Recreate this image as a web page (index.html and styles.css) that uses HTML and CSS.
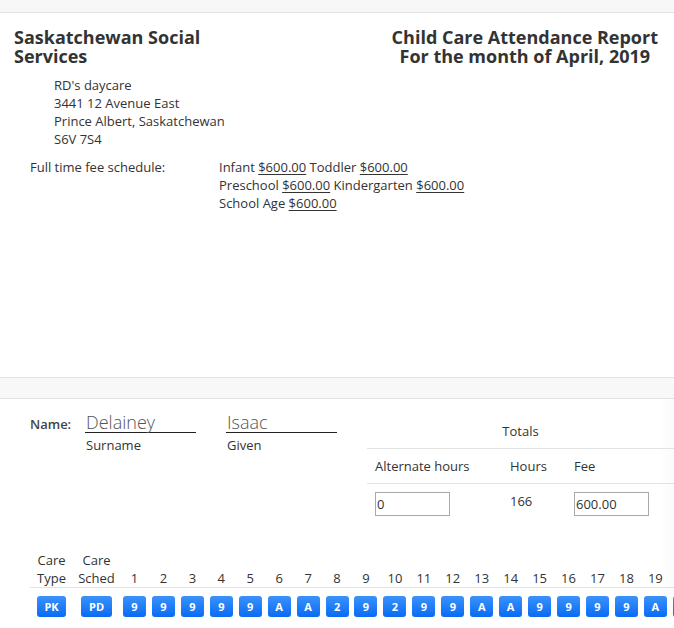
FILE: index.html
```html
<!DOCTYPE html>
<html lang="en">
<head>
<meta charset="utf-8">
<title>Child Care Attendance Report</title>
<link rel="stylesheet" href="styles.css">
</head>
<body>
<div class="topbar"></div>
<section class="sheet sheet-header">
  <div class="titles">
    <h1 class="org">Saskatchewan Social<br>Services</h1>
    <h1 class="report-title">Child Care Attendance Report<br>For the month of April, 2019</h1>
  </div>
  <address class="provider">RD's daycare<br>3441 12 Avenue East<br>Prince Albert, Saskatchewan<br>S6V 7S4</address>
  <div class="fees">
    <div class="fees-label">Full time fee schedule:</div>
    <div class="fees-list">Infant <u>$600.00</u> Toddler <u>$600.00</u><br>Preschool <u>$600.00</u> Kindergarten <u>$600.00</u><br>School Age <u>$600.00</u></div>
  </div>
</section>
<div class="gap"></div>
<section class="sheet child">
  <div class="child-top">
    <div class="name-label">Name:</div>
    <div class="name-field"><span class="name-value">Delainey</span><span class="name-caption">Surname</span></div>
    <div class="name-field"><span class="name-value">Isaac</span><span class="name-caption">Given</span></div>
    <table class="totals">
      <colgroup><col class="c-alt"><col class="c-hours"><col class="c-fee"></colgroup>
      <tr><th colspan="3" class="totals-title">Totals</th></tr>
      <tr><th>Alternate hours</th><th>Hours</th><th>Fee</th></tr>
      <tr><td><input class="box" type="text" value="0"></td><td>166</td><td><input class="box" type="text" value="600.00"></td></tr>
    </table>
  </div>
  <div class="att-wrap">
    <table class="attendance">
      <colgroup><col class="c-type"><col class="c-sched"></colgroup>
      <thead>
        <tr><th>Care<br>Type</th><th>Care<br>Sched</th><th>1</th><th>2</th><th>3</th><th>4</th><th>5</th><th>6</th><th>7</th><th>8</th><th>9</th><th>10</th><th>11</th><th>12</th><th>13</th><th>14</th><th>15</th><th>16</th><th>17</th><th>18</th><th>19</th><th>20</th><th>21</th><th>22</th><th>23</th><th>24</th><th>25</th><th>26</th><th>27</th><th>28</th><th>29</th><th>30</th></tr>
      </thead>
      <tbody>
        <tr>
          <td><span class="btn btn-type">PK</span></td>
          <td><span class="btn btn-sched">PD</span></td>
          <td><span class="btn">9</span></td><td><span class="btn">9</span></td><td><span class="btn">9</span></td><td><span class="btn">9</span></td><td><span class="btn">9</span></td>
          <td><span class="btn">A</span></td><td><span class="btn">A</span></td><td><span class="btn">2</span></td><td><span class="btn">9</span></td><td><span class="btn">2</span></td>
          <td><span class="btn">9</span></td><td><span class="btn">9</span></td><td><span class="btn">A</span></td><td><span class="btn">A</span></td><td><span class="btn">9</span></td>
          <td><span class="btn">9</span></td><td><span class="btn">9</span></td><td><span class="btn">9</span></td><td><span class="btn">A</span></td><td><span class="btn">A</span></td>
          <td><span class="btn">A</span></td><td><span class="btn">9</span></td><td><span class="btn">9</span></td><td><span class="btn">9</span></td><td><span class="btn">9</span></td>
          <td><span class="btn">9</span></td><td><span class="btn">A</span></td><td><span class="btn">A</span></td><td><span class="btn">9</span></td><td><span class="btn">9</span></td>
        </tr>
      </tbody>
    </table>
  </div>
</section>
</body>
</html>
```
FILE: styles.css
```css
html, body {
  margin: 0;
  padding: 0;
  background: #fff;
}
body {
  font-family: "Open Sans", "DejaVu Sans", sans-serif;
  font-size: 13px;
  line-height: 18px;
  color: #333;
  overflow: hidden;
}
.topbar {
  height: 12px;
  background: #f7f7f7;
  border-bottom: 1px solid #e2e2e2;
}
.sheet {
  background: #fff;
  overflow: hidden;
}
.sheet-header {
  box-sizing: border-box;
  min-height: 365px;
  padding: 15px 16px 0 14px;
  border-bottom: 1px solid #e2e2e2;
}
.titles {
  display: flex;
  justify-content: space-between;
  align-items: flex-start;
}
.org, .report-title {
  margin: 0;
  font-size: 18px;
  line-height: 19px;
  font-weight: 700;
  color: #333;
}
.report-title {
  text-align: center;
}
.provider {
  font-style: normal;
  margin: 10px 0 0 40px;
}
.fees {
  display: flex;
  margin: 10px 0 0 16px;
}
.fees-label {
  width: 189px;
  flex: none;
}
.fees-list u {
  text-decoration-thickness: 1px;
  text-underline-offset: 2px;
}
.gap {
  height: 20px;
  background: #f8f8f8;
  border-bottom: 1px solid #e2e2e2;
}
.child {
  padding: 13px 0 0 30px;
  background: linear-gradient(to right, #fff 0, #fff 660px, #fafafa 674px);
}
.child-top {
  display: flex;
  align-items: flex-start;
}
.name-label {
  width: 55px;
  flex: none;
  font-weight: 600;
  color: #444;
  padding-top: 3px;
}
.name-field {
  width: 111px;
  flex: none;
  margin-right: 30px;
  display: flex;
  flex-direction: column;
}
.name-value {
  font-size: 18px;
  font-weight: 300;
  line-height: 20px;
  color: #555;
  border-bottom: 1px solid #222;
  padding-left: 1px;
}
.name-caption {
  margin-top: 3px;
  padding-left: 1px;
}
.totals {
  flex: none;
  width: 307px;
  table-layout: fixed;
  border-collapse: collapse;
  margin-top: 2px;
}
.totals .c-alt { width: 135px; }
.totals .c-hours { width: 64px; }
.totals .c-fee { width: 108px; }
.totals th, .totals td {
  padding: 8px 8px;
  text-align: left;
  font-weight: 400;
  vertical-align: top;
}
.totals tr + tr th, .totals tr + tr td {
  border-top: 1px solid #e2e2e2;
}
.totals .totals-title {
  text-align: center;
}
.box {
  box-sizing: border-box;
  width: 75px;
  height: 24px;
  border: 1px solid #a9a9a9;
  border-radius: 0;
  padding: 0 1px;
  margin: 0;
  font-family: "Open Sans", "DejaVu Sans", sans-serif;
  font-size: 13px;
  color: #333;
  background: #fff;
}
.att-wrap {
  margin-top: 27px;
}
.attendance {
  table-layout: fixed;
  border-collapse: collapse;
  width: 958.2px;
}
.attendance col { width: 28.94px; }
.attendance .c-type { width: 43px; }
.attendance .c-sched { width: 47px; }
.attendance th {
  font-weight: 400;
  padding: 0;
  text-align: center;
  vertical-align: bottom;
  border-bottom: 1px solid #e2e2e2;
  white-space: nowrap;
}
.attendance td {
  padding: 8px 0 0;
  text-align: center;
}
.btn {
  display: inline-block;
  width: 23px;
  height: 21px;
  line-height: 21px;
  border-radius: 3px;
  background: linear-gradient(#3a92fa, #0a6bf3);
  color: #fff;
  font-weight: 700;
  font-size: 11px;
  text-align: center;
  vertical-align: top;
}
.btn-type { width: 29px; }
.btn-sched { width: 31px; }
```
